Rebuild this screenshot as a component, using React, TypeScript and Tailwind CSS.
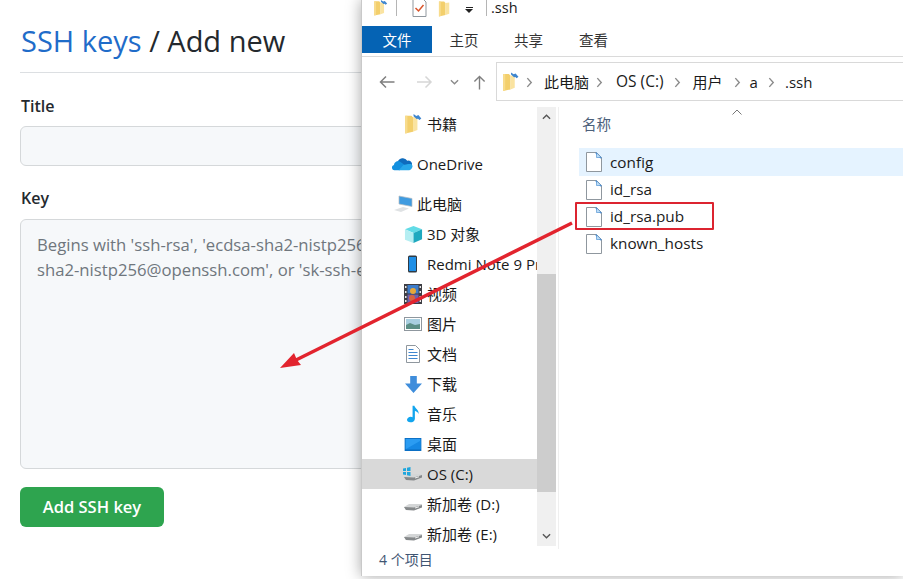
const font = "font-['Open_Sans','Noto_Sans_CJK_SC',sans-serif]";

function Folder({ className = "", pin = true }: { className?: string; pin?: boolean }) {
  return (
    <svg viewBox="0 0 16 18" className={className}>
      <path d="M1 1.500h5.500L8 3v13L1 17.500z" fill="#f3cf6c" />
      <path d="M8 3l4-.5V14.500L8 16z" fill="#fae3a0" />
      <path d="M1 1.500h2V17l-2 .5z" fill="#f8dc8c" />
      {pin && <path d="M8.500 0l2.500 1.800 1.800-.8 2.700 3-1.700 1.400-1.300-1.200-1.200.4-2.800-2.600z" fill="#3f86cf" />}
    </svg>
  );
}

function FileIcon() {
  return (
    <svg viewBox="0 0 16 20" className="w-4 h-5 shrink-0">
      <path d="M.5.500h10l5 5v14H.5z" fill="#fff" stroke="#8f979e" />
      <path d="M10 0l6 6-1.500.5L9.500 1.500z" fill="#3f86cf" />
      <path d="M10.500 1v4.500H15" fill="#bcdcf5" stroke="#3f86cf" strokeWidth=".6" />
    </svg>
  );
}

function Drive({ win = false }: { win?: boolean }) {
  return (
    <svg viewBox="0 0 20 16" className="w-5 h-4">
      <path d="M1 11l5-3h13v3l-8 3H3z" fill="#d4d6d7" />
      <path d="M1 11l10 .5 8-2.500v2.500l-8 3-8-.5z" fill="#85888a" />
      <path d="M12 11.500l4-1.200v1l-4 1.200z" fill="#f2f2f2" />
      {win && (
        <g fill="#1fa6dd">
          <path d="M0 2.500l3-.5v3H0zM4 1.800l3.500-.8v4H4zM0 6h3v3l-3-.5zM4 6h3.500v4L4 9.300z" />
        </g>
      )}
    </svg>
  );
}

const icons: Record<string, React.ReactNode> = {
  book: <Folder className="w-[18px] h-[20px]" />,
  cloud: (
    <svg viewBox="0 0 22 14" className="w-[21px] h-[14px]">
      <path d="M6 5a5.500 5.500 0 0 1 10-1.500A4 4 0 0 1 21 8H9z" fill="#0f6cbd" />
      <path d="M2.500 13.500A2.800 2.800 0 0 1 2 8a4.200 4.200 0 0 1 7-3l5 3.500-6 5z" fill="#1490df" />
      <path d="M7 13.500l5-5.500 5-1h3a3 3 0 0 1 1 4c-.5 1.600-2 2.500-3 2.500z" fill="#28a8ea" />
    </svg>
  ),
  pc: (
    <svg viewBox="0 0 20 18" className="w-5 h-[18px]">
      <path d="M6 1l13 2.500v8L6 9z" fill="#3f9be0" stroke="#b5bcc2" strokeWidth=".7" />
      <path d="M1 15l9-3 6 1.500L8 17z" fill="#dfe2e4" />
    </svg>
  ),
  cube: (
    <svg viewBox="0 0 20 20" className="w-[19px] h-[19px]">
      <path d="M10 1l9 3.500-9 4-9-4z" fill="#62dbe6" />
      <path d="M1 4.500l9 4V19l-9-3.500z" fill="#b5eef2" />
      <path d="M10 8.500l9-4V15l-9 4z" fill="#1fa9bf" />
    </svg>
  ),
  phone: (
    <svg viewBox="0 0 12 18" className="w-[12px] h-[18px]">
      <rect x="1" y="0.500" width="9" height="17" rx="1.500" fill="#2f3a44" />
      <rect x="2" y="2" width="7" height="14" fill="#1f8fe6" />
    </svg>
  ),
  film: (
    <svg viewBox="0 0 18 20" className="w-[18px] h-5">
      <rect width="18" height="20" fill="#3e3e44" />
      <rect x="3.500" y="1" width="11" height="8.500" fill="#3d7cc9" />
      <rect x="3.500" y="10.500" width="11" height="8.500" fill="#6d5fb0" />
      <circle cx="9" cy="7" r="3" fill="#e7a83a" />
      <circle cx="8" cy="14" r="3" fill="#d8643f" />
      <path d="M1 2h1.500v2H1zM1 7h1.500v2H1zM1 12h1.500v2H1zM1 16h1.500v2H1zM15.500 2H17v2h-1.500zM15.500 7H17v2h-1.500zM15.500 12H17v2h-1.500zM15.500 16H17v2h-1.500z" fill="#e8e8e8" />
    </svg>
  ),
  pic: (
    <svg viewBox="0 0 18 14" className="w-[18px] h-[14px]">
      <rect x="0.500" y="0.500" width="17" height="13" fill="#fff" stroke="#8f979e" />
      <rect x="2" y="2" width="14" height="10" fill="#a9cfe0" />
      <path d="M2 8l4-2 5 2 5-1v5H2z" fill="#5c8f86" />
    </svg>
  ),
  doc: (
    <svg viewBox="0 0 14 18" className="w-[14px] h-[18px]">
      <path d="M.5.500h9l4 4v13H.5z" fill="#fff" stroke="#8f979e" />
      <path d="M2.500 4h5v1h-5zM2.500 7h9v1h-9zM2.500 10h9v1h-9zM2.500 13h9v1h-9z" fill="#3f86cf" />
    </svg>
  ),
  down: (
    <svg viewBox="0 0 18 18" className="w-[17px] h-[17px]">
      <path d="M5.500 0h7v8H18l-9 10-9-10h5.500z" fill="#3f8ddb" />
    </svg>
  ),
  note: (
    <svg viewBox="0 0 14 18" className="w-[13px] h-[18px]">
      <path d="M6 0h2c.5 3 5 4 4.500 9C11.500 6.500 9.500 6 8.500 5.500V14c0 2.500-2.200 4-5 4C1.300 18 0 16.800 0 15.300 0 13.500 2 12 4 12c.8 0 1.500.2 2 .5z" fill="#12a5ee" />
    </svg>
  ),
  desk: (
    <svg viewBox="0 0 18 14" className="w-[18px] h-[13px]">
      <rect width="18" height="14" fill="#0b6fc4" />
      <rect x="1" y="1" width="16" height="11" fill="#2b9cf2" />
      <path d="M1 12L17 3v9z" fill="#1688e4" />
    </svg>
  ),
};

function Row({ icon, label, selected = false, iconWidth = "w-[22px]", pad = "pl-[40px]", className = "" }: { icon: React.ReactNode; label: string; selected?: boolean; iconWidth?: string; pad?: string; className?: string }) {
  return (
    <div className={`flex items-center h-[30px] ${pad} gap-[3px] text-[15px] text-[#1a1a1a] whitespace-nowrap overflow-hidden ${selected ? "bg-[#d9d9d9]" : ""} ${className}`}>
      <span className={`${iconWidth} shrink-0 flex justify-center`}>{icon}</span>
      <span>{label}</span>
    </div>
  );
}

function Sep() {
  return (
    <svg viewBox="0 0 8 12" className="w-[7px] h-[11px] shrink-0">
      <path d="M1.500 1l4.500 5-4.500 5" fill="none" stroke="#8a8a8a" strokeWidth="1.600" />
    </svg>
  );
}

export default function App() {
  return (
    <div className={`relative flex w-[903px] h-[579px] bg-white overflow-hidden ${font}`}>
      {/* GitHub form */}
      <div className="w-[361px] shrink-0 overflow-hidden">
        <div className="w-[700px] pl-[20px] pt-[20px]">
          <div className="text-[29px] leading-[42px] pb-[10px] pl-px border-b border-[#dcdfe2] text-[#24292e] whitespace-nowrap">
            <span className="text-[#1f6cc9]">SSH keys</span> / Add new
          </div>
          <div className="mt-[21px] pl-px text-[16px] leading-[24px] font-semibold text-[#24292e]">Title</div>
          <div className="mt-[8px] h-[40px] rounded-[6px] border border-[#d5d8da] bg-[#f6f8fa]" />
          <div className="mt-[20px] pl-px text-[16px] leading-[24px] font-semibold text-[#24292e]">Key</div>
          <div className="mt-[9px] h-[250px] rounded-[6px] border border-[#d5d8da] bg-[#f6f8fa] pl-[16px] pt-[12px] text-[16.700px] leading-[25px] text-[#6f767d] whitespace-nowrap">
            <div>Begins with 'ssh-rsa', 'ecdsa-sha2-nistp256', 'ecdsa-sha2-nistp384'</div>
            <div>sha2-nistp256@openssh.com', or 'sk-ssh-ed25519@openssh.com'</div>
          </div>
          <button className="mt-[18px] h-[40px] w-[144px] rounded-[6px] bg-[#2ea44f] text-white text-[16.500px] font-semibold block">Add SSH key</button>
        </div>
      </div>

      {/* Explorer window */}
      <div className="w-[542px] h-[576px] shrink-0 flex flex-col bg-white border-l border-[#c9c9c9] shadow-[0_0_14px_rgba(0,0,0,0.35)] z-10">
        <div className="h-[26px] shrink-0 flex items-start pl-[11px] overflow-hidden">
          <Folder className="w-[15px] h-[16px]" />
          <span className="ml-[8px] w-px h-[16px] bg-[#b5b5b5]" />
          <svg viewBox="0 0 14 17" className="ml-[15px] w-[15px] h-[17px]">
            <path d="M.5-1h10l3 3v14.500H.5z" fill="#fff" stroke="#8f979e" />
            <path d="M3 8l3 3 5-6" fill="none" stroke="#d9542b" strokeWidth="1.500" />
          </svg>
          <Folder pin={false} className="ml-[11px] w-[15px] h-[17px]" />
          <span className="ml-[12px] mt-[7px] flex flex-col items-center gap-[1px]">
            <span className="w-[7px] h-px bg-[#222]" />
            <span className="w-0 h-0 border-x-[4px] border-x-transparent border-t-[4px] border-t-[#222]" />
          </span>
          <span className="ml-[13px] w-px h-[16px] bg-[#b5b5b5]" />
          <span className="ml-[4px] text-[14.500px] leading-[15px] text-[#1a1a1a]">.ssh</span>
        </div>

        <div className="h-[31px] shrink-0 flex items-start border-b border-[#dadada] text-[14.500px] leading-[29px] text-[#333]">
          <div className="w-[70px] h-[27px] bg-[#0563b4] text-white text-center">文件</div>
          <div className="w-[64px] text-center">主页</div>
          <div className="w-[65px] text-center">共享</div>
          <div className="w-[65px] text-center">查看</div>
        </div>

        <div className="h-[50px] shrink-0 flex items-start">
          <div className="w-[134px] h-[45px] pt-[5px] flex items-center shrink-0">
            <svg viewBox="0 0 16 14" className="ml-[16px] w-[17px] h-[14px]">
              <path d="M16 7H2M7.500 1.500L2 7l5.500 5.500" fill="none" stroke="#7f7f7f" strokeWidth="1.500" />
            </svg>
            <svg viewBox="0 0 16 14" className="ml-[22px] w-[16px] h-[14px]">
              <path d="M0 7h14M8.500 1.500L14 7l-5.500 5.500" fill="none" stroke="#d6d6d6" strokeWidth="1.500" />
            </svg>
            <svg viewBox="0 0 10 6" className="ml-[17px] w-[9px] h-[6px]">
              <path d="M1 1l4 4 4-4" fill="none" stroke="#8a8a8a" strokeWidth="1.500" />
            </svg>
            <svg viewBox="0 0 14 16" className="ml-[14px] w-[13px] h-[16px]">
              <path d="M7 16V2M1.500 7.500L7 2l5.500 5.500" fill="none" stroke="#7f7f7f" strokeWidth="1.500" />
            </svg>
          </div>
          <div className="mt-[5px] flex-1 h-[39px] border border-r-0 border-[#d9d9d9] flex items-center pl-[5px] pt-px text-[15px] text-[#1a1a1a] whitespace-nowrap">
            <Folder className="w-[17px] h-[20px]" />
            <span className="ml-[7px]"><Sep /></span>
            <span className="ml-[11px]">此电脑</span>
            <span className="ml-[7px]"><Sep /></span>
            <span className="ml-[13px] text-[15.500px]">OS (C:)</span>
            <span className="ml-[10px]"><Sep /></span>
            <span className="ml-[12px]">用户</span>
            <span className="ml-[11px]"><Sep /></span>
            <span className="ml-[9px]">a</span>
            <span className="ml-[10px]"><Sep /></span>
            <span className="ml-[10px]">.ssh</span>
          </div>
        </div>

        <div className="flex-1 min-h-0 flex overflow-hidden">
          <div className="w-[175px] shrink-0 overflow-hidden">
            <Row icon={icons.book} label="书籍" className="mt-[2px]" />
            <Row icon={icons.cloud} label="OneDrive" pad="pl-[28px]" iconWidth="w-[24px]" className="mt-[10px]" />
            <Row icon={icons.pc} label="此电脑" pad="pl-[29px]" iconWidth="w-[23px]" className="mt-[10px]" />
            <Row icon={icons.cube} label="3D 对象" />
            <Row icon={icons.phone} label="Redmi Note 9 Pro" />
            <Row icon={icons.film} label="视频" />
            <Row icon={icons.pic} label="图片" />
            <Row icon={icons.doc} label="文档" />
            <Row icon={icons.down} label="下载" />
            <Row icon={icons.note} label="音乐" />
            <Row icon={icons.desk} label="桌面" />
            <Row icon={<Drive win />} label="OS (C:)" selected />
            <Row icon={<Drive />} label="新加卷 (D:)" />
            <Row icon={<Drive />} label="新加卷 (E:)" />
          </div>
          <div className="w-[19px] shrink-0 mb-[3px] bg-[#f0f0f0] flex flex-col items-center">
            <div className="h-[20px] flex items-center">
              <svg viewBox="0 0 10 6" className="w-[9px] h-[6px]"><path d="M1 5l4-4 4 4" fill="none" stroke="#555" strokeWidth="1.500" /></svg>
            </div>
            <div className="mt-[147px] w-full h-[218px] bg-[#cdcdcd]" />
            <div className="mt-auto h-[20px] flex items-center">
              <svg viewBox="0 0 10 6" className="w-[9px] h-[6px]"><path d="M1 1l4 4 4-4" fill="none" stroke="#555" strokeWidth="1.500" /></svg>
            </div>
          </div>
          <div className="flex-1 ml-[2px] border-l border-[#efefef] pl-[20px]">
            <div className="relative h-[41px] pl-[3px] pt-[6px] text-[14.500px] leading-[24px] text-[#4c607a]">
              名称
              <svg viewBox="0 0 10 6" className="absolute left-[153px] top-[2px] w-[10px] h-[6px]"><path d="M.5 5.500L5 1l4.500 4.500" fill="none" stroke="#777" /></svg>
            </div>
            {["config", "id_rsa", "id_rsa.pub", "known_hosts"].map((f, i) => (
              <div key={f} className={`flex items-center gap-[7px] pl-[7px] text-[15.300px] text-[#1a1a1a] ${i === 0 ? "bg-[#e5f3ff] h-[28px]" : "h-[27px]"}`}>
                <FileIcon />
                <span className="ml-px">{f}</span>
              </div>
            ))}
          </div>
        </div>

        <div className="h-[27px] shrink-0 flex items-center pl-[17px] pb-[6px] text-[14px] text-[#3f5572]">4 个项目</div>
      </div>

      {/* Annotation overlay */}
      <div className="absolute left-[575px] top-[202px] w-[139px] h-[28px] border-[2.500px] border-[#dc2430] rounded-[1px] z-20" />
      <svg className="absolute inset-0 w-[903px] h-[579px] z-20 pointer-events-none" viewBox="0 0 903 579">
        <path d="M572 223L296 360" stroke="#e2242e" strokeWidth="3.500" />
        <path d="M280 368l14-15 3 7 4 5z" fill="#e2242e" />
      </svg>
    </div>
  );
}
